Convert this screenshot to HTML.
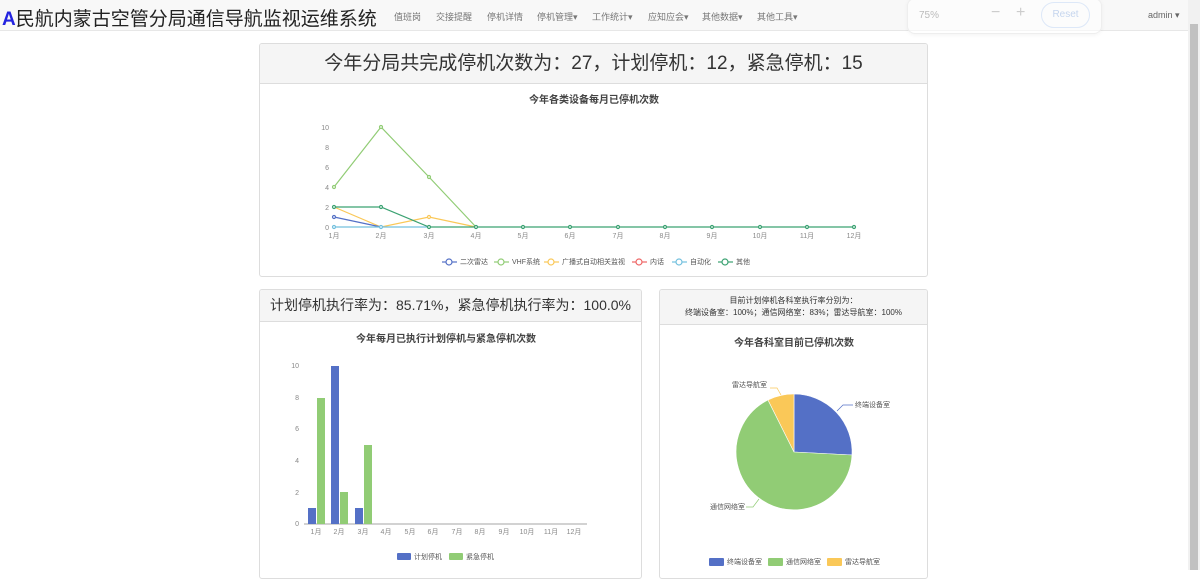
<!DOCTYPE html>
<html><head><meta charset="utf-8"><style>
*{margin:0;padding:0;box-sizing:border-box}
body{width:1200px;height:570px;overflow:hidden;background:#fff;font-family:"Liberation Sans","Noto Sans CJK SC",sans-serif;position:relative;color:#333}
.nav{position:absolute;left:0;top:0;width:1188px;height:31px;background:#f8f8f8;border-bottom:1px solid #e7e7e7}
.brand{position:absolute;left:2px;top:4px;font-size:19px;color:#222;white-space:nowrap}
.brand b{color:#2323e0;font-weight:bold}
.menu{position:absolute;top:10px;font-size:9px;color:#777;white-space:nowrap}
.zoom{position:absolute;left:907px;top:-2px;width:195px;height:36px;border:1px solid #eee;border-radius:8px;background:rgba(255,255,255,.6);box-shadow:0 1px 4px rgba(0,0,0,.05)}
.sb{position:absolute;left:1188px;top:0;width:12px;height:570px;background:#f1f1f1}
.sb div{position:absolute;left:2px;top:24px;width:8px;height:546px;background:#c1c1c1}
.panel{position:absolute;border:1px solid #ddd;border-radius:3px;background:#fff;overflow:hidden}
.ph{background:#f5f5f5;border-bottom:1px solid #ddd;text-align:center;color:#333}
svg text{font-family:"Liberation Sans","Noto Sans CJK SC",sans-serif}
</style></head><body>
<div class="nav">
<div class="brand"><b>A</b>民航内蒙古空管分局通信导航监视运维系统</div>
<span class="menu" style="left:394px">值班岗</span>
<span class="menu" style="left:436px">交接提醒</span>
<span class="menu" style="left:487px">停机详情</span>
<span class="menu" style="left:537px">停机管理▾</span>
<span class="menu" style="left:592px">工作统计▾</span>
<span class="menu" style="left:648px">应知应会▾</span>
<span class="menu" style="left:702px">其他数据▾</span>
<span class="menu" style="left:757px">其他工具▾</span>
<span class="menu" style="left:1148px;color:#666">admin ▾</span>
</div>
<div class="zoom">
<span style="position:absolute;left:11px;top:11px;font-size:10px;color:#bbb">75%</span>
<span style="position:absolute;left:83px;top:5px;font-size:16px;color:#ccc">−</span>
<span style="position:absolute;left:108px;top:5px;font-size:16px;color:#ccc">+</span>
<span style="position:absolute;left:133px;top:3px;width:49px;height:26px;border:1px solid #dde8f8;border-radius:13px;font-size:10px;color:#c5d5ee;text-align:center;line-height:24px">Reset</span>
</div>
<div class="sb"><div></div></div>

<div class="panel" style="left:259px;top:43px;width:669px;height:234px">
<div class="ph" style="height:40px;font-size:19px;line-height:39px">今年分局共完成停机次数为：27，计划停机：12，紧急停机：15</div>
<svg width="669" height="194" style="position:absolute;left:0;top:40px" viewBox="259 83 669 194">
<text x="593" y="102" font-size="10" font-weight="bold" text-anchor="middle" fill="#444">今年各类设备每月已停机次数</text>
<g font-size="7" fill="#888" text-anchor="end">
<text x="328" y="129">10</text><text x="328" y="169">6</text><text x="328" y="149">8</text><text x="328" y="189">4</text><text x="328" y="209">2</text><text x="328" y="229">0</text></g>
<g font-size="7" fill="#888" text-anchor="middle">
<text x="333" y="237">1月</text><text x="380" y="237">2月</text><text x="428" y="237">3月</text><text x="475" y="237">4月</text><text x="522" y="237">5月</text><text x="569" y="237">6月</text><text x="617" y="237">7月</text><text x="664" y="237">8月</text><text x="711" y="237">9月</text><text x="759" y="237">10月</text><text x="806" y="237">11月</text><text x="853" y="237">12月</text></g>
<g fill="#fff" stroke-width="1.2">
<polyline points="333,186 380,126 428,176 475,226" fill="none" stroke="#91cc75"/>
<polyline points="333,206 380,226 428,216 475,226" fill="none" stroke="#fac858"/>
<polyline points="333,216 380,226" fill="none" stroke="#5470c6"/>
<polyline points="333,226 428,226" fill="none" stroke="#73c0de"/>
<polyline points="333,206 380,206 428,226 853,226" fill="none" stroke="#3ba272"/>
<circle cx="333" cy="186" r="1.5" stroke="#91cc75"/><circle cx="380" cy="126" r="1.5" stroke="#91cc75"/><circle cx="428" cy="176" r="1.5" stroke="#91cc75"/>
<circle cx="333" cy="216" r="1.5" stroke="#5470c6"/><circle cx="428" cy="216" r="1.5" stroke="#fac858"/>
<circle cx="333" cy="206" r="1.5" stroke="#3ba272"/><circle cx="380" cy="206" r="1.5" stroke="#3ba272"/>
<g stroke="#3ba272"><circle cx="428" cy="226" r="1.5"/><circle cx="475" cy="226" r="1.5"/><circle cx="522" cy="226" r="1.5"/><circle cx="569" cy="226" r="1.5"/><circle cx="617" cy="226" r="1.5"/><circle cx="664" cy="226" r="1.5"/><circle cx="711" cy="226" r="1.5"/><circle cx="759" cy="226" r="1.5"/><circle cx="806" cy="226" r="1.5"/><circle cx="853" cy="226" r="1.5"/></g>
<circle cx="333" cy="226" r="1.5" stroke="#73c0de"/><circle cx="380" cy="226" r="1.5" stroke="#73c0de"/>
</g>
<g font-size="7" fill="#555" stroke-width="1.2">
<line x1="441" y1="261" x2="456" y2="261" stroke="#5470c6"/><circle cx="448" cy="261" r="3" fill="#fff" stroke="#5470c6"/><text x="459" y="263">二次雷达</text>
<line x1="493" y1="261" x2="508" y2="261" stroke="#91cc75"/><circle cx="500" cy="261" r="3" fill="#fff" stroke="#91cc75"/><text x="511" y="263">VHF系统</text>
<line x1="543" y1="261" x2="558" y2="261" stroke="#fac858"/><circle cx="550" cy="261" r="3" fill="#fff" stroke="#fac858"/><text x="561" y="263">广播式自动相关监视</text>
<line x1="631" y1="261" x2="646" y2="261" stroke="#ee6666"/><circle cx="638" cy="261" r="3" fill="#fff" stroke="#ee6666"/><text x="649" y="263">内话</text>
<line x1="671" y1="261" x2="686" y2="261" stroke="#73c0de"/><circle cx="678" cy="261" r="3" fill="#fff" stroke="#73c0de"/><text x="689" y="263">自动化</text>
<line x1="717" y1="261" x2="732" y2="261" stroke="#3ba272"/><circle cx="724" cy="261" r="3" fill="#fff" stroke="#3ba272"/><text x="735" y="263">其他</text>
</g>
</svg>
</div>

<div class="panel" style="left:259px;top:289px;width:383px;height:290px">
<div class="ph" style="height:32px;font-size:14px;line-height:31px">计划停机执行率为：85.71%，紧急停机执行率为：100.0%</div>
<svg width="383" height="258" style="position:absolute;left:0;top:32px" viewBox="259 321 383 258">
<text x="445" y="341" font-size="10" font-weight="bold" text-anchor="middle" fill="#444">今年每月已执行计划停机与紧急停机次数</text>
<g font-size="7" fill="#888" text-anchor="end">
<text x="298" y="367">10</text><text x="298" y="399">8</text><text x="298" y="430">6</text><text x="298" y="462">4</text><text x="298" y="494">2</text><text x="298" y="525">0</text></g>
<line x1="303" y1="523" x2="586" y2="523" stroke="#888" stroke-width="0.8"/>
<g fill="#5470c6"><rect x="307" y="507" width="8" height="16"/><rect x="330" y="365" width="8" height="158"/><rect x="354" y="507" width="8" height="16"/></g>
<g fill="#91cc75"><rect x="316" y="397" width="8" height="126"/><rect x="339" y="491" width="8" height="32"/><rect x="363" y="444" width="8" height="79"/></g>
<g font-size="7" fill="#888" text-anchor="middle">
<text x="315" y="533">1月</text><text x="338" y="533">2月</text><text x="362" y="533">3月</text><text x="385" y="533">4月</text><text x="409" y="533">5月</text><text x="432" y="533">6月</text><text x="456" y="533">7月</text><text x="479" y="533">8月</text><text x="503" y="533">9月</text><text x="526" y="533">10月</text><text x="550" y="533">11月</text><text x="573" y="533">12月</text></g>
<rect x="396" y="552" width="14" height="7" rx="1" fill="#5470c6"/><text x="413" y="558" font-size="7" fill="#555">计划停机</text>
<rect x="448" y="552" width="14" height="7" rx="1" fill="#91cc75"/><text x="465" y="558" font-size="7" fill="#555">紧急停机</text>
</svg>
</div>

<div class="panel" style="left:659px;top:289px;width:269px;height:290px">
<div class="ph" style="height:35px;font-size:8px;line-height:12px;padding-top:5px">目前计划停机各科室执行率分别为：<br>终端设备室：100%；通信网络室：83%；雷达导航室：100%</div>
<svg width="269" height="255" style="position:absolute;left:0;top:35px" viewBox="659 324 269 255">
<text x="793" y="345" font-size="10" font-weight="bold" text-anchor="middle" fill="#444">今年各科室目前已停机次数</text>
<path d="M793,451 L793,393 A58,58 0 0 1 851,454 Z" fill="#5470c6" stroke="#fff" stroke-width="0.6"/>
<path d="M793,451 L851,454 A58,58 0 1 1 767,399 Z" fill="#91cc75" stroke="#fff" stroke-width="0.6"/>
<path d="M793,451 L767,399 A58,58 0 0 1 793,393 Z" fill="#fac858" stroke="#fff" stroke-width="0.6"/>
<g fill="none" stroke-width="0.7"><polyline points="836,410 842,404 852,404" stroke="#5470c6"/><polyline points="758,498 752,506 745,506" stroke="#91cc75"/><polyline points="780,394 776,387 769,387" stroke="#fac858"/></g>
<g font-size="7" fill="#555"><text x="854" y="406">终端设备室</text><text x="709" y="508">通信网络室</text><text x="731" y="386">雷达导航室</text></g>
<rect x="708" y="557" width="15" height="8" rx="1" fill="#5470c6"/><text x="726" y="563" font-size="7" fill="#555">终端设备室</text>
<rect x="767" y="557" width="15" height="8" rx="1" fill="#91cc75"/><text x="785" y="563" font-size="7" fill="#555">通信网络室</text>
<rect x="826" y="557" width="15" height="8" rx="1" fill="#fac858"/><text x="844" y="563" font-size="7" fill="#555">雷达导航室</text>
</svg>
</div>
</body></html>
